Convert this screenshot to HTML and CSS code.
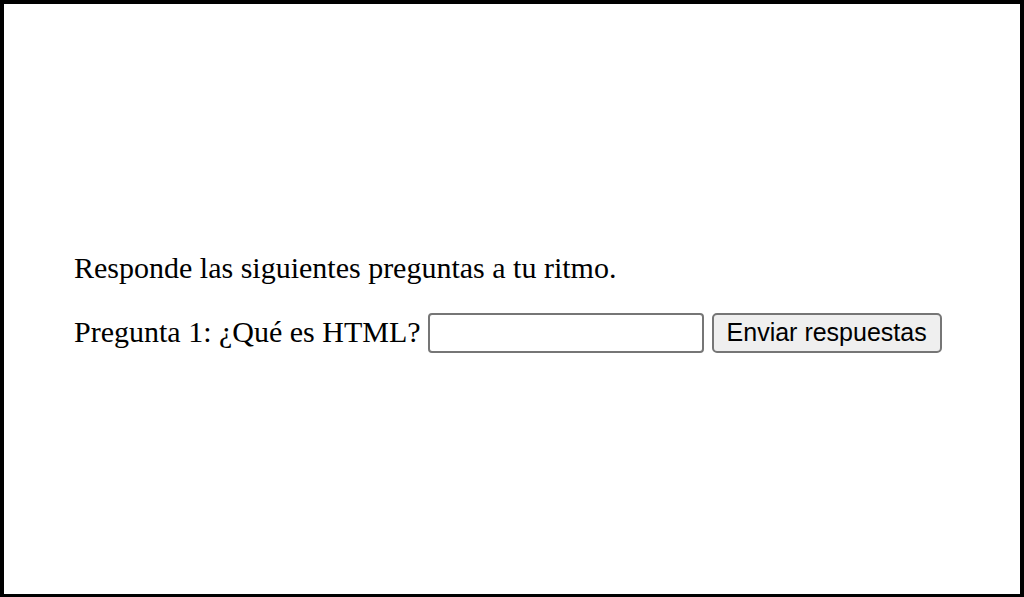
FILE: index.html
```html
<!DOCTYPE html>
<html lang="es">
<head>
    <meta charset="UTF-8">
    <meta name="viewport" content="width=device-width, initial-scale=1.0">
    <title>Cuestionario</title>
    <link rel="stylesheet" href="styles.css">
</head>
<body>
    <div class="frame">
        <p class="intro">Responde las siguientes preguntas a tu ritmo.</p>
        <form class="quiz" onsubmit="return false;">
            <label for="q1">Pregunta 1: ¿Qué es HTML?</label>
            <input type="text" id="q1" name="q1">
            <button type="submit">Enviar respuestas</button>
        </form>
    </div>
</body>
</html>
```

FILE: styles.css
```css
html, body {
    margin: 0;
    padding: 0;
    background-color: #fff;
}

.frame {
    box-sizing: border-box;
    height: 597px;
    border: 4px solid #000;
    border-bottom-width: 3px;
    padding: 5px 0 0 70px;
    display: flex;
    flex-direction: column;
    justify-content: center;
    gap: 28px;
    font-family: "Liberation Serif", "Times New Roman", serif;
    font-size: 30px;
    color: #000;
}

.intro {
    margin: 0;
}

.quiz {
    margin: 0;
}

.quiz input[type="text"] {
    box-sizing: border-box;
    width: 276px;
    height: 40px;
    margin: 0;
    padding: 2px 4px;
    border: 2px solid #767676;
    border-radius: 4px;
    background-color: #fff;
    font-family: "Liberation Sans", Arial, sans-serif;
    font-size: 25px;
}

.quiz button {
    box-sizing: border-box;
    height: 40px;
    margin: 0;
    padding: 0 13px;
    border: 2px solid #767676;
    border-radius: 5px;
    background-color: #efefef;
    color: #000;
    font-family: "Liberation Sans", Arial, sans-serif;
    font-size: 25px;
}
```
